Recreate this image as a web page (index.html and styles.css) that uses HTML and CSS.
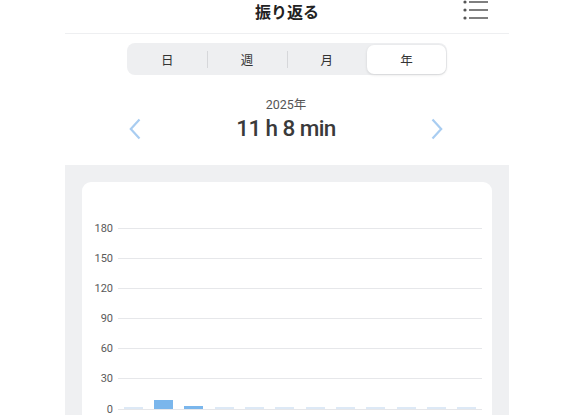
FILE: index.html
```html
<!DOCTYPE html>
<html lang="ja">
<head>
  <meta charset="UTF-8">
  <meta name="viewport" content="width=device-width, initial-scale=1.0">
  <title>振り返る</title>
  <link rel="stylesheet" href="styles.css">
</head>
<body>
  <div class="page">
    <header class="top-bar">
      <h1>振り返る</h1>
      <button class="menu-btn" aria-label="menu">
        <svg width="26" height="22" viewBox="0 0 26 22">
          <circle cx="2" cy="2" r="1.6" fill="#555"/>
          <circle cx="2" cy="10" r="1.6" fill="#555"/>
          <circle cx="2" cy="18" r="1.6" fill="#555"/>
          <path d="M6 2H25M6 10H25M6 18H25" stroke="#555" stroke-width="1.6"/>
        </svg>
      </button>
    </header>

    <div class="segments">
      <button class="seg">日</button>
      <span class="sep"></span>
      <button class="seg">週</button>
      <span class="sep"></span>
      <button class="seg">月</button>
      <span class="sep hidden"></span>
      <button class="seg active">年</button>
    </div>

    <div class="summary">
      <button class="arrow" aria-label="prev">
        <svg width="12" height="22" viewBox="0 0 12 22"><path d="M10.5 1.5L1.8 11l8.7 9.5" fill="none" stroke="#a9cdf1" stroke-width="2.2"/></svg>
      </button>
      <div class="summary-text">
        <div class="year">2025年</div>
        <div class="total">11 h 8 min</div>
      </div>
      <button class="arrow" aria-label="next">
        <svg width="12" height="22" viewBox="0 0 12 22"><path d="M1.5 1.5L10.2 11l-8.7 9.5" fill="none" stroke="#a9cdf1" stroke-width="2.2"/></svg>
      </button>
    </div>

    <section class="panel">
      <div class="card">
        <div class="chart">
          <div class="row"><span class="label">180</span><span class="line"></span></div>
          <div class="row"><span class="label">150</span><span class="line"></span></div>
          <div class="row"><span class="label">120</span><span class="line"></span></div>
          <div class="row"><span class="label">90</span><span class="line"></span></div>
          <div class="row"><span class="label">60</span><span class="line"></span></div>
          <div class="row"><span class="label">30</span><span class="line"></span></div>
          <div class="row"><span class="label">0</span><span class="line"></span></div>
          <div class="bars" id="bars"></div>
        </div>
      </div>
    </section>
  </div>

  <script>
    // hours per month
    const months = [0, 8.7, 3, 0, 0, 0, 0, 0, 0, 0, 0, 0];
    const pxPerHour = 181 / 180;
    const bars = document.getElementById("bars");
    months.forEach(h => {
      const col = document.createElement("div");
      col.className = "col";
      const bar = document.createElement("div");
      bar.className = h > 0 ? "bar" : "bar empty";
      if (h > 0) bar.style.height = (h * pxPerHour) + "px";
      col.appendChild(bar);
      bars.appendChild(col);
    });
  </script>
</body>
</html>
```

FILE: styles.css
```css
body {
  margin: 0;
  background: #fff;
  font-family: Roboto, 'Noto Sans CJK JP', sans-serif;
  color: #333;
}
.page {
  width: 444px;
  margin: 0 auto;
  height: 415px;
  overflow: hidden;
}
.top-bar {
  position: relative;
  height: 33px;
  border-bottom: 1px solid #eeeff1;
  display: flex;
  justify-content: center;
}
.top-bar h1 {
  margin: 0;
  font-family: 'Noto Sans CJK JP', sans-serif;
  font-size: 16px;
  font-weight: bold;
  line-height: 22px;
  color: #222;
}
.menu-btn {
  position: absolute;
  right: 20px;
  top: 0;
  padding: 0;
  border: none;
  background: none;
  line-height: 0;
}
.segments {
  width: 320px;
  height: 32px;
  margin: 9px auto 0;
  background: #eeeff1;
  border-radius: 8px;
  display: flex;
  align-items: center;
  box-sizing: border-box;
  padding: 0 1px;
}
.seg {
  flex: 1;
  height: 29px;
  border: none;
  background: none;
  font-family: 'Noto Sans CJK JP', sans-serif;
  font-size: 12.5px;
  color: #333;
  padding: 0;
  border-radius: 7px;
}
.seg.active {
  background: #fff;
  box-shadow: 0 1px 3px rgba(0, 0, 0, 0.12);
}
.sep {
  width: 1px;
  height: 17px;
  background: #d6d7da;
}
.sep.hidden {
  background: transparent;
}
.summary {
  display: flex;
  align-items: center;
  justify-content: space-between;
  padding: 0 66px 0 64px;
  margin-top: 21px;
  height: 47px;
}
.arrow {
  border: none;
  background: none;
  padding: 0;
  margin-top: 18px;
  line-height: 0;
}
.summary-text {
  text-align: center;
}
.year {
  font-size: 12.5px;
  color: #555;
  line-height: 16px;
  margin-bottom: 1px;
}
.total {
  font-size: 22.5px;
  font-weight: 500;
  color: #3a3a3a;
  line-height: 28px;
  letter-spacing: -0.6px;
}
.panel {
  margin-top: 22px;
  background: #eff0f2;
  padding: 17px 17px 0;
  height: 300px;
}
.card {
  background: #fff;
  border-radius: 9px;
  height: 300px;
  padding: 31px 10px 0 0;
}
.chart {
  position: relative;
}
.row {
  height: 30.17px;
  display: flex;
  align-items: center;
}
.label {
  width: 31px;
  text-align: right;
  font-size: 11px;
  color: #5a5a5a;
  padding-right: 5px;
}
.line {
  flex: 1;
  height: 1px;
  background: #e6e7ea;
}
.bars {
  position: absolute;
  left: 36px;
  right: 0;
  bottom: 15px;
  display: flex;
  align-items: flex-end;
}
.col {
  flex: 1;
  display: flex;
  justify-content: center;
}
.bar {
  width: 19px;
  background: #7ab6ec;
}
.bar.empty {
  height: 2px;
  background: #dde9f6;
}
```
